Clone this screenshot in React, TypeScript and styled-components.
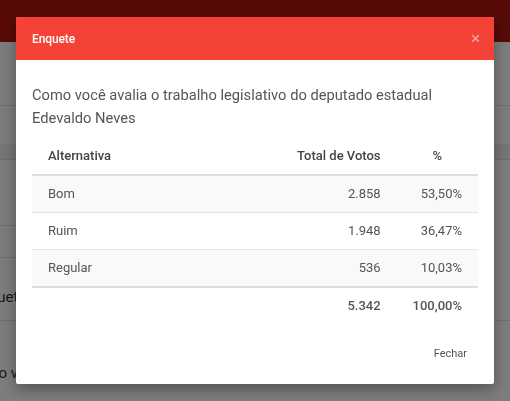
import React from 'react';
import styled, { createGlobalStyle } from 'styled-components';

const GlobalStyle = createGlobalStyle`
  html, body {
    margin: 0;
    padding: 0;
    background: #fafafa;
    font-family: Roboto, "Liberation Sans", Arial, sans-serif;
    overflow: hidden;
  }
`;

const Page = styled.div`
  width: 510px;
  height: 401px;
  overflow: hidden;
  background: #fafafa;
`;

const TopBar = styled.div`
  height: 42px;
  background: #ae150c;
`;

const Section = styled.div<{ height: number; line?: boolean; shade?: boolean; short?: boolean; padBottom?: number }>`
  height: ${p => p.height}px;
  box-sizing: border-box;
  background: ${p => (p.shade ? '#ececec' : 'transparent')};
  border-bottom: ${p => (p.line ? '1px solid #dcdcdc' : 'none')};
  width: ${p => (p.short ? '300px' : '100%')};
  display: flex;
  align-items: flex-end;
  padding-bottom: ${p => p.padBottom ?? 0}px;
  overflow: hidden;
`;

const PageText = styled.span<{ shift: number }>`
  font-size: 15px;
  line-height: 18px;
  color: #333;
  white-space: nowrap;
  margin-left: ${p => p.shift}px;
`;

const Backdrop = styled.div`
  position: fixed;
  inset: 0;
  background: rgba(0, 0, 0, 0.5);
  display: flex;
  align-items: flex-start;
  justify-content: center;
  padding-top: 17px;
`;

const ModalBox = styled.div`
  width: 478px;
  height: 367px;
  background: #fff;
  border-radius: 2px;
  box-shadow: 0 5px 15px rgba(0, 0, 0, 0.35);
  display: flex;
  flex-direction: column;
  overflow: hidden;
`;

const ModalHeader = styled.div`
  height: 43px;
  background: #f44336;
  display: flex;
  align-items: center;
  justify-content: space-between;
  padding: 0 14px 0 16px;
  box-sizing: border-box;
`;

const ModalTitle = styled.h4`
  margin: 0;
  font-size: 12px;
  font-weight: 500;
  color: #fff;
  letter-spacing: -0.1px;
`;

const CloseButton = styled.button`
  background: none;
  border: none;
  padding: 0;
  font-family: inherit;
  font-size: 17px;
  line-height: 1;
  color: rgba(255, 255, 255, 0.55);
  cursor: pointer;
`;

const ModalBody = styled.div`
  padding: 24px 16px 0 16px;
`;

const Question = styled.p`
  margin: 0 0 8px 0;
  font-size: 14.7px;
  line-height: 23px;
  color: #555;
`;

const Table = styled.table`
  width: 100%;
  border-collapse: collapse;
  font-size: 13px;
  color: #555;
`;

const HeadCell = styled.th<{ align: 'left' | 'right' | 'center'; width?: number }>`
  text-align: ${p => p.align};
  font-weight: 500;
  color: #444;
  padding: 8px 16px;
  height: 20px;
  line-height: 20px;
  border-bottom: 2px solid #ddd;
  ${p => (p.width ? `width: ${p.width}px;` : '')}
`;

const Row = styled.tr<{ striped: boolean; last?: boolean }>`
  background: ${p => (p.striped ? '#f9f9f9' : '#fff')};
  border-bottom: ${p => (p.last ? '2px solid #ddd' : '1px solid #e4e4e4')};
`;

const Cell = styled.td<{ align: 'left' | 'right'; bold?: boolean }>`
  text-align: ${p => p.align};
  padding: 8px 16px;
  height: 20px;
  line-height: 20px;
  font-weight: ${p => (p.bold ? 500 : 400)};
`;

const ModalFooter = styled.div`
  margin-top: auto;
  display: flex;
  justify-content: flex-end;
  padding: 0 20px 20px 0;
`;

const FlatButton = styled.button`
  background: none;
  border: none;
  font-family: inherit;
  font-size: 11px;
  color: #555;
  padding: 4px 7px;
  cursor: pointer;
`;

const votes = [
  { label: 'Bom', total: '2.858', pct: '53,50%' },
  { label: 'Ruim', total: '1.948', pct: '36,47%' },
  { label: 'Regular', total: '536', pct: '10,03%' },
];

const App = () => {
  return (
    <>
      <GlobalStyle />
      <Page>
        <TopBar />
        <Section height={64} line />
        <Section height={38} />
        <Section height={16} shade line />
        <Section height={66} short line />
        <Section height={32} short line />
        <Section height={63} line padBottom={14}>
          <PageText shift={-28}>Enquete</PageText>
        </Section>
        <Section height={80} padBottom={19}>
          <PageText shift={-33}>Como você</PageText>
        </Section>
      </Page>
      <Backdrop>
        <ModalBox>
          <ModalHeader>
            <ModalTitle>Enquete</ModalTitle>
            <CloseButton aria-label="Close">&times;</CloseButton>
          </ModalHeader>
          <ModalBody>
            <Question>
              Como você avalia o trabalho legislativo do deputado estadual Edevaldo Neves
            </Question>
            <Table>
              <thead>
                <tr>
                  <HeadCell align="left">Alternativa</HeadCell>
                  <HeadCell align="right">Total de Votos</HeadCell>
                  <HeadCell align="center" width={49}>%</HeadCell>
                </tr>
              </thead>
              <tbody>
                {votes.map((v, i) => (
                  <Row key={v.label} striped={i % 2 === 0} last={i === votes.length - 1}>
                    <Cell align="left">{v.label}</Cell>
                    <Cell align="right">{v.total}</Cell>
                    <Cell align="right">{v.pct}</Cell>
                  </Row>
                ))}
                <tr>
                  <Cell align="left" />
                  <Cell align="right" bold>5.342</Cell>
                  <Cell align="right" bold>100,00%</Cell>
                </tr>
              </tbody>
            </Table>
          </ModalBody>
          <ModalFooter>
            <FlatButton>Fechar</FlatButton>
          </ModalFooter>
        </ModalBox>
      </Backdrop>
    </>
  );
};

export default App;
